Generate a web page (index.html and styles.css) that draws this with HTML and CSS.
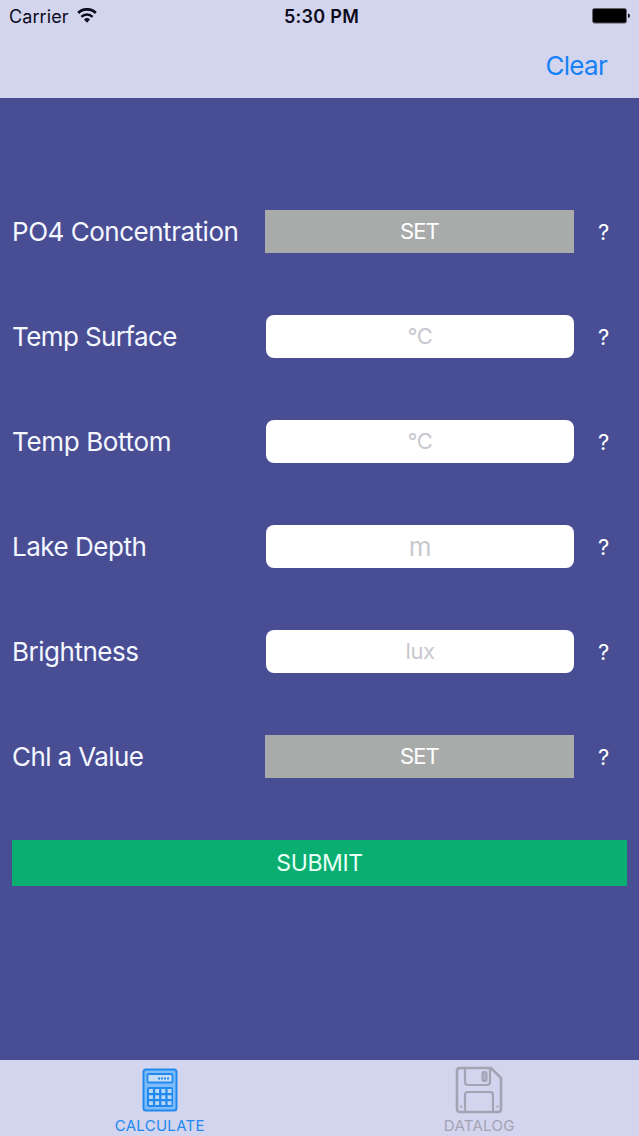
FILE: index.html
```html
<!DOCTYPE html>
<html lang="en">
<head>
    <meta charset="UTF-8">
    <meta name="viewport" content="width=device-width, initial-scale=1.0">
    <title>Lake Calculator</title>
    <link rel="stylesheet" href="styles.css">
</head>
<body>
    <header class="top-bar">
        <div class="status-bar">
            <div class="carrier">
                <span>Carrier</span>
                <svg class="wifi" viewBox="0 0 20 15" width="20" height="15">
                    <path d="M1.2 5A12.4 12.4 0 0 1 18.8 5" fill="none" stroke="#0b0b1c" stroke-width="2.7"/>
                    <path d="M4.4 8.9A7.9 7.9 0 0 1 15.6 8.9" fill="none" stroke="#0b0b1c" stroke-width="2.5"/>
                    <path d="M7 11.5A4.3 4.3 0 0 1 13 11.5L10 14.8Z" fill="#0b0b1c"/>
                </svg>
            </div>
            <span class="time">5:30 PM</span>
            <svg class="battery" viewBox="0 0 38 16" width="38" height="16">
                <rect x="0.5" y="0.5" width="34" height="14.6" rx="2" fill="#000" stroke="#66666f"/>
                <path d="M36 5.5Q38 5.8 38 7.8Q38 9.8 36 10.1Z" fill="#111"/>
            </svg>
        </div>
        <div class="nav-bar">
            <button class="clear-button" type="reset" form="lakeForm">Clear</button>
        </div>
    </header>

    <form class="lake-form" id="lakeForm">
        <div class="row">
            <label class="row-label">PO4 Concentration</label>
            <button class="set-button" type="button">SET</button>
            <button class="help" type="button">?</button>
        </div>
        <div class="row">
            <label class="row-label row-label-tight" for="surface">Temp Surface</label>
            <input class="field" id="surface" type="text" placeholder="°C">
            <button class="help" type="button">?</button>
        </div>
        <div class="row">
            <label class="row-label row-label-wide" for="bottom">Temp Bottom</label>
            <input class="field" id="bottom" type="text" placeholder="°C">
            <button class="help" type="button">?</button>
        </div>
        <div class="row">
            <label class="row-label" for="depth">Lake Depth</label>
            <input class="field field-large" id="depth" type="text" placeholder="m">
            <button class="help" type="button">?</button>
        </div>
        <div class="row">
            <label class="row-label" for="brightness">Brightness</label>
            <input class="field" id="brightness" type="text" placeholder="lux">
            <button class="help" type="button">?</button>
        </div>
        <div class="row">
            <label class="row-label row-label-tight">Chl a Value</label>
            <button class="set-button" type="button">SET</button>
            <button class="help" type="button">?</button>
        </div>
        <button class="submit-button" type="button">SUBMIT</button>
    </form>

    <nav class="tab-bar">
        <a class="tab tab-active">
            <svg class="tab-icon" viewBox="0 0 48 48" width="48" height="48" fill="none" stroke="currentColor">
                <rect x="7.5" y="3.5" width="33" height="41" rx="2.5" fill="#7dbcf8" stroke-width="2"/>
                <rect x="11.5" y="8" width="25" height="8.5" rx="1" fill="#c5dcf5" stroke-width="1.8"/>
                <path d="M22 12.5H34" stroke-width="2" stroke-dasharray="2 1"/>
                <rect x="11.5" y="21.5" width="25" height="19" rx="1" fill="currentColor" stroke-width="1"/>
                <path d="M13 25H35.5M13 31.2H35.5M13 37.2H35.5" stroke="#b9d8f6" stroke-width="3.8" stroke-dasharray="3.9 2.3"/>
            </svg>
            <span class="tab-label">CALCULATE</span>
        </a>
        <a class="tab">
            <svg class="tab-icon" viewBox="0 0 48 48" width="48" height="48" fill="none" stroke="currentColor" stroke-width="2.6">
                <path d="M5 2H36L46 12V43Q46 46 43 46H5Q2 46 2 43V5Q2 2 5 2Z"/>
                <path d="M10 2V16Q10 19 13 19H32Q35 19 35 16V2" stroke-width="2.2"/>
                <rect x="27.5" y="6" width="4" height="9" rx="1.5" fill="#b4b5c8" stroke-width="2"/>
                <path d="M10 46V29Q10 26 13 26H35Q38 26 38 29V46" stroke-width="2.2"/>
                <path d="M5 40.5H7M41.5 40.5H43.5" stroke-width="2"/>
            </svg>
            <span class="tab-label">DATALOG</span>
        </a>
    </nav>
</body>
</html>
```

FILE: styles.css
```css
* {
    box-sizing: border-box;
}

body {
    font-family: Inter, 'Liberation Sans', sans-serif;
    margin: 0;
    height: 1136px;
    display: flex;
    flex-direction: column;
    background: #494e94;
    color: #f4f7ff;
}

button {
    font-family: inherit;
    border: none;
    border-radius: 0;
    padding: 0;
    cursor: pointer;
}

.top-bar {
    height: 98px;
    background: #d3d4ee;
}

.status-bar {
    display: grid;
    grid-template-columns: 1fr auto 1fr;
    align-items: center;
    height: 32px;
    padding: 0 9px;
    color: #0b0b1c;
    font-size: 18px;
}

.carrier {
    display: flex;
    align-items: center;
    gap: 8px;
    letter-spacing: 0.1px;
}

.wifi {
    margin-top: -2px;
}

.time {
    font-weight: 600;
    margin-left: 4px;
    letter-spacing: 0.3px;
}

.battery {
    justify-self: end;
}

.nav-bar {
    display: flex;
    justify-content: flex-end;
    align-items: center;
    height: 66px;
    padding: 0 32px 0 0;
}

.clear-button {
    background: none;
    color: #1482f6;
    font-size: 26px;
    letter-spacing: -0.7px;
}

.lake-form {
    flex: 1;
    padding: 112px 12px 0;
}

.row {
    display: grid;
    grid-template-columns: 253px 309px 59px;
    align-items: center;
    height: 43px;
    margin-bottom: 62px;
}

.row-label {
    font-size: 26px;
    letter-spacing: -0.48px;
    white-space: nowrap;
}

.row-label-tight {
    letter-spacing: -0.6px;
}

.row-label-wide {
    letter-spacing: -0.35px;
}

.set-button {
    height: 43px;
    padding-bottom: 2px;
    background: #a9abab;
    color: #fff;
    font-size: 22px;
    letter-spacing: -0.9px;
}

.field {
    width: 308px;
    height: 43px;
    margin-left: 1px;
    padding: 0 0 2px;
    border: none;
    border-radius: 8px;
    background: #fff;
    font-family: inherit;
    font-size: 22px;
    letter-spacing: -0.5px;
    text-align: center;
}

.field-large {
    padding: 0;
    font-size: 26px;
}

.field::placeholder {
    color: #c8c8ce;
}

.help {
    background: none;
    color: #fff;
    font-size: 22px;
}

.submit-button {
    display: block;
    width: 100%;
    height: 46px;
    background: #09ae70;
    color: #e8fff6;
    font-size: 23px;
    letter-spacing: -0.4px;
}

.tab-bar {
    display: flex;
    height: 76px;
    overflow: hidden;
    background: #d3d4ee;
}

.tab {
    flex: 1;
    display: flex;
    flex-direction: column;
    align-items: center;
    padding-top: 6px;
    color: #a2a3b3;
}

.tab-active {
    color: #2289f0;
}

.tab-icon {
    flex-shrink: 0;
}

.tab-label {
    font-size: 15px;
    line-height: 24px;
    letter-spacing: 0.3px;
}
```
